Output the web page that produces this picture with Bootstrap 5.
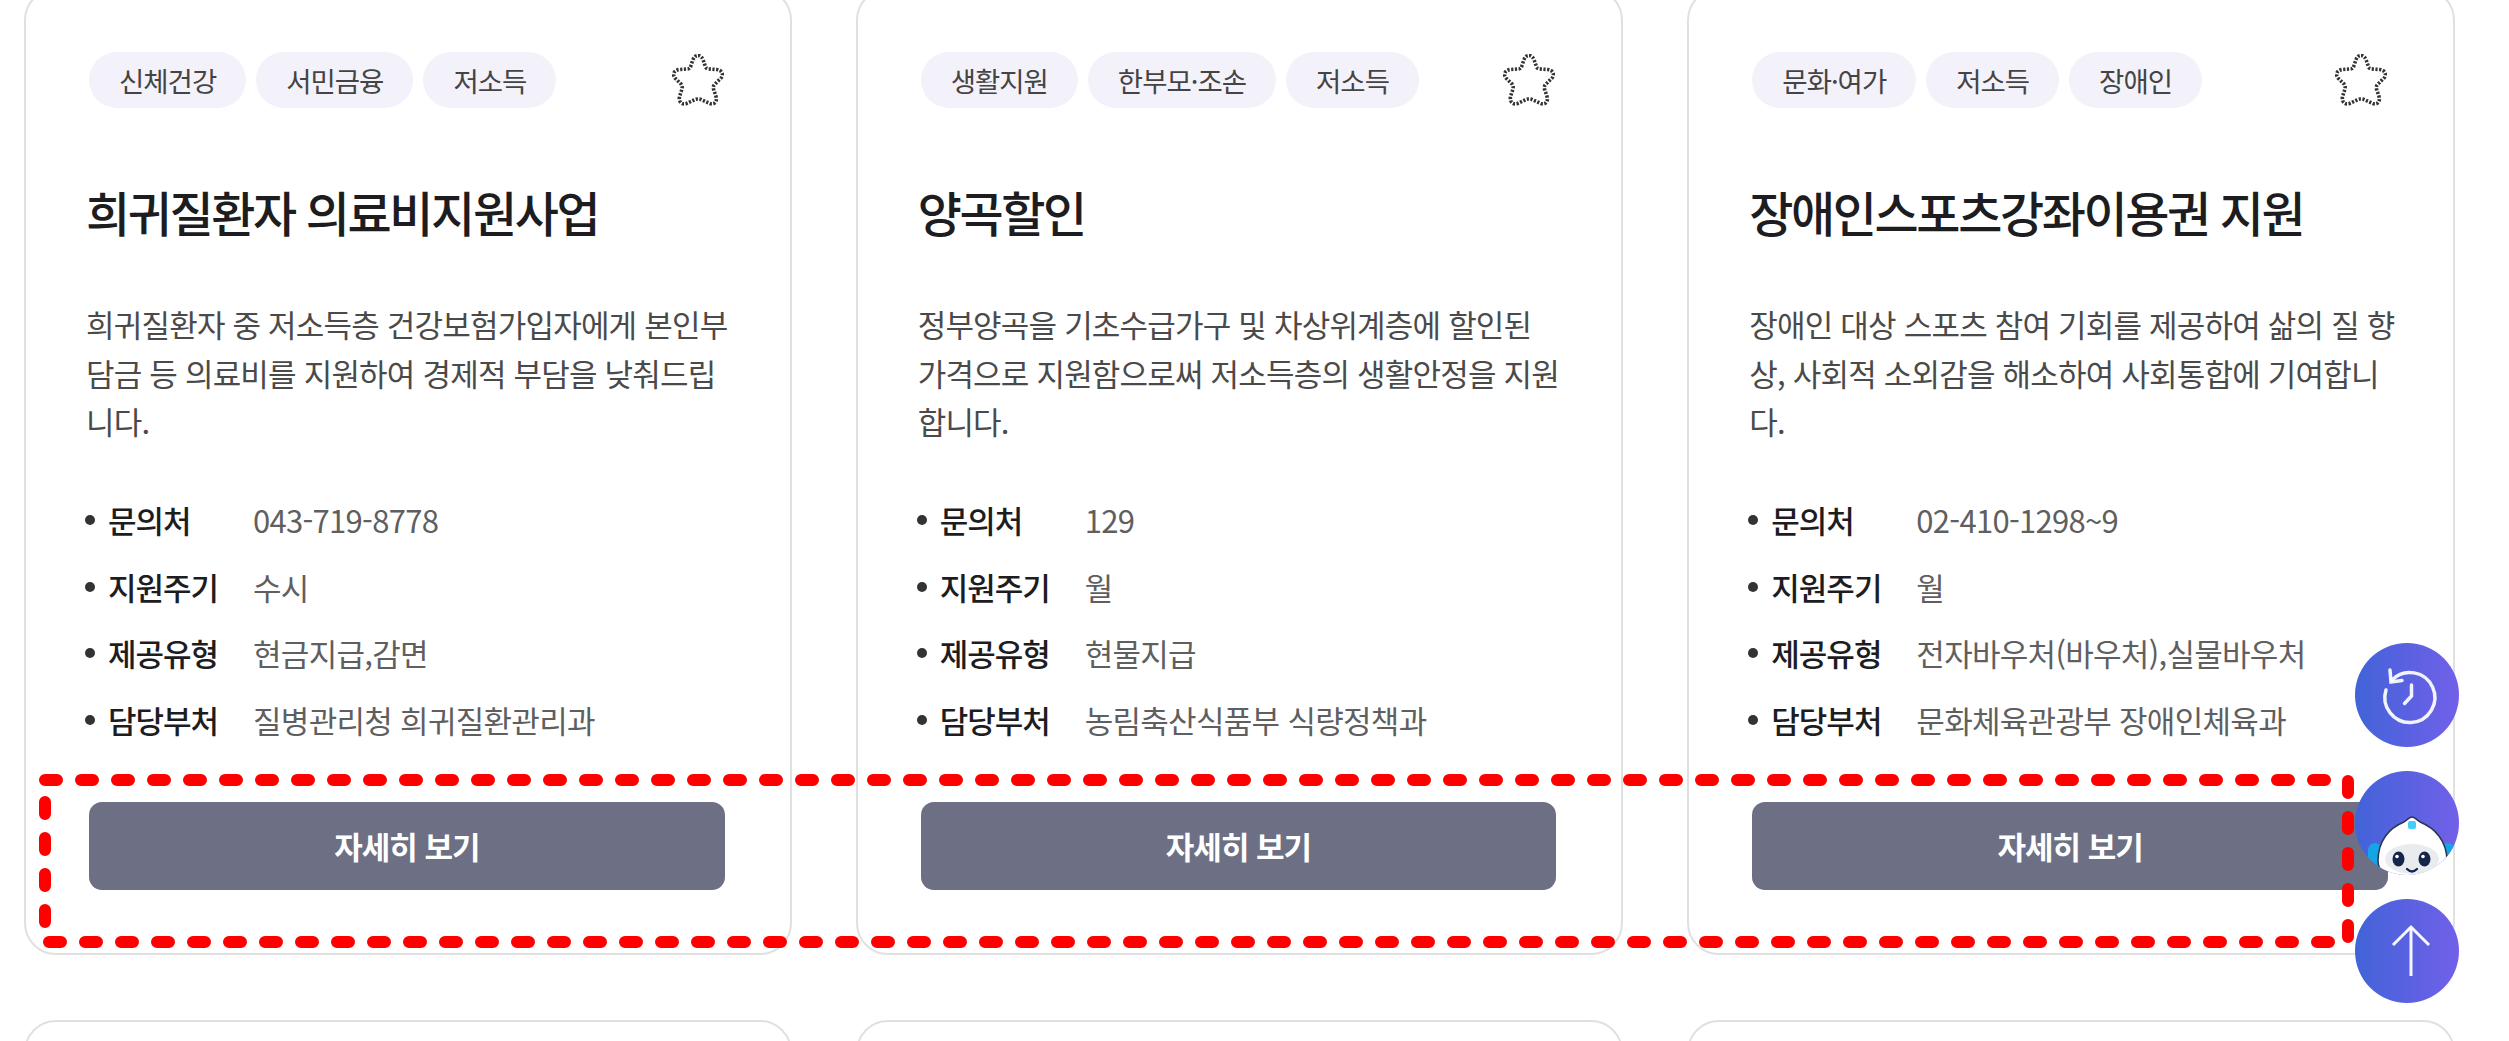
<!DOCTYPE html>
<html lang="ko">
<head>
    <meta charset="UTF-8">
    <meta name="viewport" content="width=device-width, initial-scale=1.0">
    <title>복지 서비스 목록</title>
    <link href="https://cdn.jsdelivr.net/npm/bootstrap@5.3.2/dist/css/bootstrap.min.css" rel="stylesheet">
    <style>
        html, body {
            height: 100%;
            overflow: hidden;
            background: #fff;
        }

        body {
            font-family: "Noto Sans CJK KR", "Noto Sans", sans-serif;
            color: #1d1d1f;
        }

        /* page is scrolled, first row starts just above the fold */
        .svc-grid {
            display: grid;
            grid-template-columns: repeat(3, 1fr);
            gap: 65px 64px;
            margin-top: -12px;
            padding: 0 54px 0 24px;
        }

        .svc-card {
            height: 967px;
            padding: 62px 65px 0 63px;
            border: 2px solid #e0e0e0;
            border-radius: 32px;
            background: #fff;
        }

        .svc-top {
            height: 56px;
        }

        .svc-tags {
            gap: 10px;
        }

        .svc-tag {
            height: 56px;
            padding: 0 30px;
            border-radius: 28px;
            background: #f3f2fb;
            color: #444;
            font-size: 27.5px;
            letter-spacing: -1px;
            line-height: 56px;
        }

        .svc-star {
            width: 52px;
            height: 52px;
            margin-right: 1px;
        }

        .svc-title {
            margin: 71px 0 0 -3px;
            color: #1d1d1f;
            font-size: 48px;
            font-weight: 500;
            letter-spacing: -2.4px;
            line-height: 64px;
        }

        .svc-desc {
            margin: 57px -8px 0 -3px;
            height: 146px;
            color: #4a4a4a;
            font-size: 31px;
            letter-spacing: -0.8px;
            line-height: 48.6px;
            word-break: break-all;
        }

        .svc-info {
            margin: 41px 0 0;
            padding: 0;
            list-style: none;
            font-size: 31px;
            letter-spacing: -1px;
        }

        .svc-info li {
            display: flex;
            height: 66.5px;
            line-height: 66px;
        }

        .svc-info li::before {
            content: "";
            flex: none;
            width: 10px;
            height: 10px;
            margin: 28px 13px 0 -4px;
            border-radius: 50%;
            background: #333;
        }

        .svc-info b {
            flex: none;
            width: 145px;
            font-weight: 500;
        }

        .svc-info span {
            color: #5f5f5f;
            letter-spacing: -0.7px;
        }

        .svc-btn {
            width: 100%;
            height: 88px;
            margin-top: 49px;
            border: 0;
            border-radius: 13px;
            background: #6d7084;
            color: #fff;
            font-size: 31px;
            font-weight: 700;
            letter-spacing: -1px;
        }

        .fab-stack {
            position: fixed;
            right: 50px;
            bottom: 38px;
            z-index: 10;
        }

        .fab-btn {
            width: 104px;
            height: 104px;
            padding: 0;
            border: 0;
            border-radius: 50%;
            overflow: hidden;
            background: linear-gradient(90deg, #4263d8, #7160e9);
        }

        .fab-btn svg {
            display: block;
        }

        /* red dashed annotation over the buttons */
        .mark-box {
            position: fixed;
            top: 0;
            left: 0;
            z-index: 5;
            pointer-events: none;
        }
    </style>
</head>
<body>
    <div class="svc-grid">
        <div class="svc-card">
            <div class="svc-top d-flex justify-content-between align-items-center">
                <div class="svc-tags d-flex">
                    <span class="svc-tag">신체건강</span>
                    <span class="svc-tag">서민금융</span>
                    <span class="svc-tag">저소득</span>
                </div>
                <svg class="svc-star" viewBox="0 0 52 52"><use href="#star"/></svg>
            </div>
            <h3 class="svc-title">희귀질환자 의료비지원사업</h3>
            <p class="svc-desc">희귀질환자 중 저소득층 건강보험가입자에게 본인부담금 등 의료비를 지원하여 경제적 부담을 낮춰드립니다.</p>
            <ul class="svc-info">
                <li><b>문의처</b><span>043-719-8778</span></li>
                <li><b>지원주기</b><span>수시</span></li>
                <li><b>제공유형</b><span>현금지급,감면</span></li>
                <li><b>담당부처</b><span>질병관리청 희귀질환관리과</span></li>
            </ul>
            <button class="svc-btn d-block" type="button">자세히 보기</button>
        </div>

        <div class="svc-card">
            <div class="svc-top d-flex justify-content-between align-items-center">
                <div class="svc-tags d-flex">
                    <span class="svc-tag">생활지원</span>
                    <span class="svc-tag">한부모·조손</span>
                    <span class="svc-tag">저소득</span>
                </div>
                <svg class="svc-star" viewBox="0 0 52 52"><use href="#star"/></svg>
            </div>
            <h3 class="svc-title">양곡할인</h3>
            <p class="svc-desc">정부양곡을 기초수급가구 및 차상위계층에 할인된 가격으로 지원함으로써 저소득층의 생활안정을 지원합니다.</p>
            <ul class="svc-info">
                <li><b>문의처</b><span>129</span></li>
                <li><b>지원주기</b><span>월</span></li>
                <li><b>제공유형</b><span>현물지급</span></li>
                <li><b>담당부처</b><span>농림축산식품부 식량정책과</span></li>
            </ul>
            <button class="svc-btn d-block" type="button">자세히 보기</button>
        </div>

        <div class="svc-card">
            <div class="svc-top d-flex justify-content-between align-items-center">
                <div class="svc-tags d-flex">
                    <span class="svc-tag">문화·여가</span>
                    <span class="svc-tag">저소득</span>
                    <span class="svc-tag">장애인</span>
                </div>
                <svg class="svc-star" viewBox="0 0 52 52"><use href="#star"/></svg>
            </div>
            <h3 class="svc-title">장애인스포츠강좌이용권 지원</h3>
            <p class="svc-desc">장애인 대상 스포츠 참여 기회를 제공하여 삶의 질 향상, 사회적 소외감을 해소하여 사회통합에 기여합니다.</p>
            <ul class="svc-info">
                <li><b>문의처</b><span>02-410-1298~9</span></li>
                <li><b>지원주기</b><span>월</span></li>
                <li><b>제공유형</b><span>전자바우처(바우처),실물바우처</span></li>
                <li><b>담당부처</b><span>문화체육관광부 장애인체육과</span></li>
            </ul>
            <button class="svc-btn d-block" type="button">자세히 보기</button>
        </div>

        <div class="svc-card"></div>
        <div class="svc-card"></div>
        <div class="svc-card"></div>
    </div>

    <svg class="mark-box" width="2509" height="1041" fill="none" stroke="#ff0000" stroke-width="12" stroke-linecap="round" stroke-dasharray="12 24">
        <path d="M45 780H2340"/>
        <path d="M49 942H2345"/>
        <path d="M45 802V930"/>
        <path d="M2348 781V940"/>
    </svg>

    <div class="fab-stack d-flex flex-column gap-4">
        <button class="fab-btn" type="button" aria-label="최근 본 항목">
            <svg width="104" height="104" viewBox="0 0 104 104" fill="none" stroke="#fff" stroke-opacity=".92" stroke-width="3.5" stroke-linecap="round">
                <path d="M37 37A25 25 0 1 1 31 47"/>
                <path d="M35 27L36 39L47 37.500"/>
                <path d="M56.500 42V53L49.500 60.500"/>
            </svg>
        </button>
        <button class="fab-btn" type="button" aria-label="챗봇">
            <svg width="104" height="104" viewBox="0 0 104 104">
                <rect x="13" y="72" width="14" height="28" rx="7" fill="#13a5e6"/>
                <rect x="86" y="72" width="14" height="28" rx="7" fill="#13a5e6"/>
                <path d="M57 46C60 46 62 49 65 51C80 57 92 70 92 90C92 104 76 110 57 110C38 110 23 104 23 90C23 70 34 57 49 51C52 49 54 46 57 46Z" fill="#fff" stroke="#2a3350" stroke-width="1.500"/>
                <ellipse cx="57" cy="88" rx="27" ry="15" fill="#e9ecee"/>
                <rect x="53" y="50" width="8" height="8" rx="2" fill="#45cdf7"/>
                <ellipse cx="43.500" cy="88" rx="6" ry="7.500" fill="#15244a"/>
                <ellipse cx="69.500" cy="88" rx="6" ry="7.500" fill="#15244a"/>
                <circle cx="42" cy="85.500" r="1.800" fill="#fff"/>
                <circle cx="68" cy="85.500" r="1.800" fill="#fff"/>
                <path d="M52 98Q57 103 62 98" fill="none" stroke="#15244a" stroke-width="2.200" stroke-linecap="round"/>
            </svg>
        </button>
        <button class="fab-btn" type="button" aria-label="맨 위로">
            <svg width="104" height="104" viewBox="0 0 104 104" fill="none" stroke="#fff" stroke-opacity=".95" stroke-width="3">
                <path d="M56 28V77"/>
                <path d="M38 46L56 28L74 46"/>
            </svg>
        </button>
    </div>

    <svg width="0" height="0" class="d-block">
        <symbol id="star" viewBox="0 0 52 52">
            <path d="M26 1.500C29 1.500 30.500 4 31.500 7L33 11.500C33.500 14 35 15 37 15L44.500 15.500C50 16 52 20.500 49 24L43 30C41.500 31.500 41 33 41.500 35L44 42.500C45.500 48 42 51 38 49.500L29 45.500C27 44.800 25 44.800 23 45.500L14.500 49.500C10 51 6.500 48 7.500 42.500L10 35C10.500 33 10 31.500 9 30L3 24C0 20.500 2 16 7.500 15.500L15 15C17 15 18.500 14 19 11.500L20.500 7C21.500 4 23 1.500 26 1.500Z" fill="none" stroke="#333" stroke-width="3.600" stroke-dasharray="2.200 1.500"/>
        </symbol>
    </svg>

    <script src="https://cdn.jsdelivr.net/npm/bootstrap@5.3.2/dist/js/bootstrap.bundle.min.js"></script>
</body>
</html>
